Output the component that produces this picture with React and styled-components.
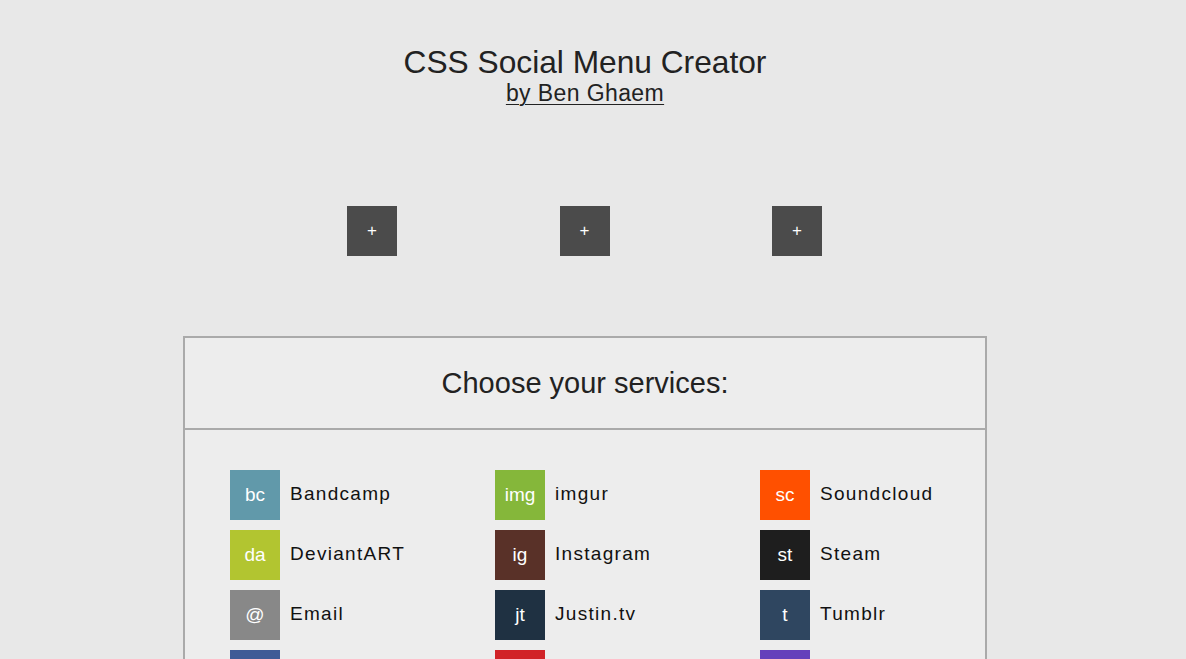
import styled, { createGlobalStyle } from 'styled-components';

const GlobalStyle = createGlobalStyle`
  html, body {
    margin: 0;
    padding: 0;
    background: #e8e8e8;
    font-family: 'Liberation Sans', Arial, sans-serif;
    color: #222;
  }
`;

// page column, right padding stands in for the scrollbar gutter
const Page = styled.div`
  display: flex;
  flex-direction: column;
  align-items: center;
  padding-right: 16px;
  padding-top: 44px;
`;

const Title = styled.h1`
  margin: 0;
  font-size: 31.7px;
  font-weight: normal;
  line-height: 36px;
  color: #222;
`;

const Byline = styled.a`
  font-size: 23px;
  letter-spacing: 0.4px;
  line-height: 26px;
  color: #222;
  text-decoration: underline;
  text-underline-offset: 3px;
  text-decoration-thickness: 1px;
`;

const Slots = styled.div`
  display: flex;
  gap: 162.5px;
  margin-top: 100px;
  margin-left: -1px;
`;

const AddButton = styled.button`
  width: 50px;
  height: 50px;
  border: none;
  padding: 0;
  background: #4b4b4b;
  color: #fff;
  font-family: 'Liberation Sans', Arial, sans-serif;
  font-size: 17px;
  cursor: pointer;
`;

const Panel = styled.section`
  width: 800px;
  margin-top: 80px;
  border: 2px solid #aaaaaa;
  background: #ededed;
`;

const PanelHeader = styled.h2`
  margin: 0;
  height: 90px;
  display: flex;
  align-items: center;
  justify-content: center;
  border-bottom: 2px solid #aaaaaa;
  font-size: 29px;
  font-weight: normal;
  color: #222;
`;

const ServiceGrid = styled.div`
  display: grid;
  grid-template-columns: repeat(3, 265px);
  grid-auto-flow: column;
  grid-template-rows: repeat(5, 50px);
  row-gap: 10px;
  padding: 40px 0 40px 45px;
`;

const Service = styled.label`
  display: flex;
  align-items: center;
  gap: 10px;
  cursor: pointer;
`;

const Badge = styled.span`
  width: 50px;
  height: 50px;
  display: flex;
  align-items: center;
  justify-content: center;
  background: ${(p) => p.$color};
  color: #fff;
  font-size: 19px;
`;

const Label = styled.span`
  font-size: 19px;
  letter-spacing: 1.3px;
  line-height: 22px;
  margin-top: -2px;
  color: #111;
`;

const services = [
  ['bc', 'Bandcamp', '#6199aa'],
  ['da', 'DeviantART', '#b2c530'],
  ['@', 'Email', '#888888'],
  ['fb', 'Facebook', '#3f5b96'],
  ['gh', 'GitHub', '#333333'],
  ['img', 'imgur', '#85b73a'],
  ['ig', 'Instagram', '#593128'],
  ['jt', 'Justin.tv', '#1f3142'],
  ['lf', 'LastFM', '#d12227'],
  ['li', 'LinkedIn', '#0e76a8'],
  ['sc', 'Soundcloud', '#ff5000'],
  ['st', 'Steam', '#1e1e1e'],
  ['t', 'Tumblr', '#2f4660'],
  ['tw', 'Twitch', '#6541bb'],
  ['yt', 'YouTube', '#cc181e'],
];

export default function App() {
  return (
    <>
      <GlobalStyle />
      <Page>
        <Title>CSS Social Menu Creator</Title>
        <Byline href="#">by Ben Ghaem</Byline>

        <Slots>
          <AddButton>+</AddButton>
          <AddButton>+</AddButton>
          <AddButton>+</AddButton>
        </Slots>

        <Panel>
          <PanelHeader>Choose your services:</PanelHeader>
          <ServiceGrid>
            {services.map(([code, name, color]) => (
              <Service key={name}>
                <Badge $color={color}>{code}</Badge>
                <Label>{name}</Label>
              </Service>
            ))}
          </ServiceGrid>
        </Panel>
      </Page>
    </>
  );
}
